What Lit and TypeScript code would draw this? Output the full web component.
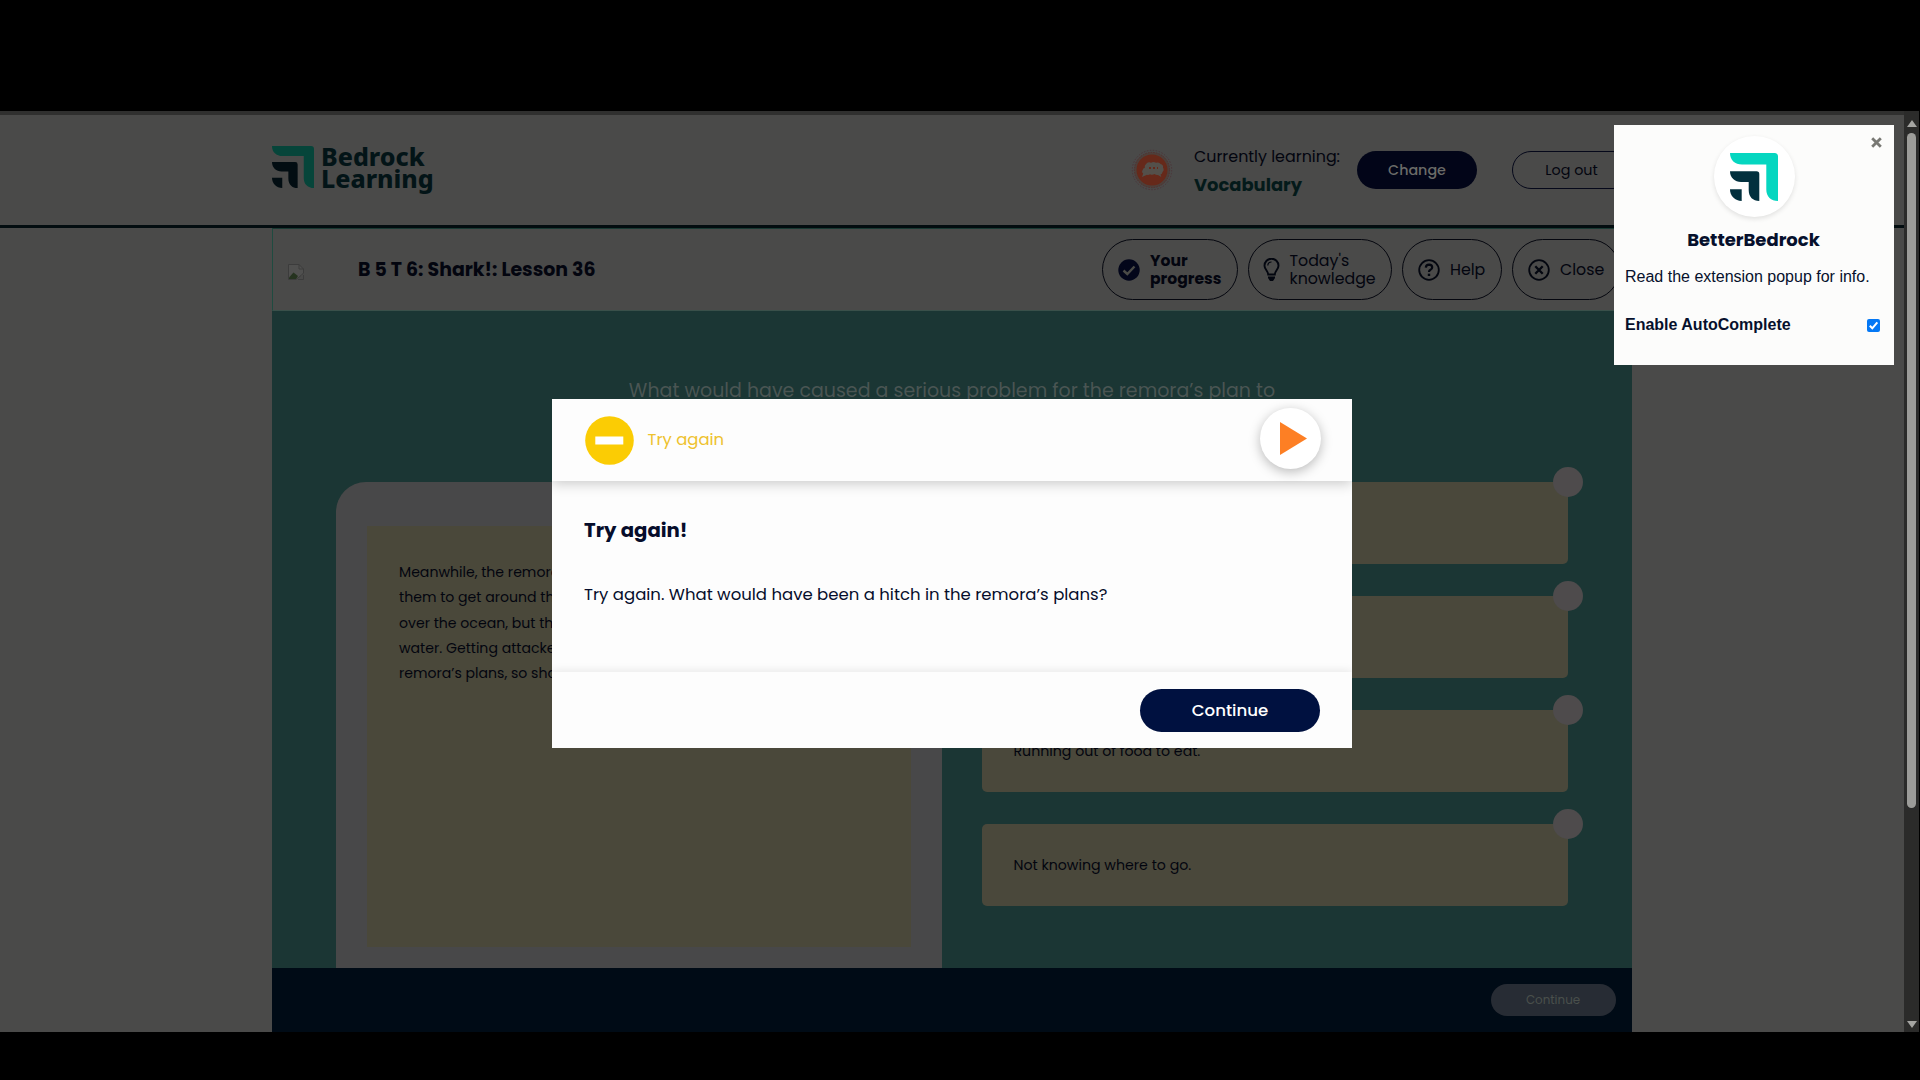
import { LitElement, html, css, svg } from "lit";
import { customElement } from "lit/decorators.js";

const mark = (a: string, b: string) => svg`
  <path fill=${a} d="M0 0H44.5Q48 0 48 3.5V48C41 48 36.3 43.500 36.300 36.500V11.500H12C5 11.500 0 7 0 0Z"/>
  <path fill=${b} d="M0 18.300H26.500Q29.300 18.300 29.300 21.100V48C23 48 18.700 44 18.700 37V29H11C5 29 0 25 0 18.300Z"/>
  <path fill=${b} d="M0 36.300H11.700V48C5 48 0 43 0 36.300Z"/>`;

const PASSAGE = [
  "Meanwhile, the remora",
  "them to get around the",
  "over the ocean, but the",
  "water. Getting attacked",
  "remora’s plans, so sharks",
];
const ANSWERS = ["", "", "Running out of food to eat.", "Not knowing where to go."];

@customElement("app-root")
export class AppRoot extends LitElement {
  static styles = css`
    :host { display: block; width: 1920px; height: 1080px; background: #000; overflow: hidden; position: relative;
      font-family: Poppins, Inter, "Liberation Sans", sans-serif; color: #03050f; white-space: nowrap; box-sizing: border-box; padding-top: 111px; }
    * { box-sizing: border-box; }
    svg { display: block; flex: none; }
    .screen { display: flex; height: 921px; width: 1919px; background: #4a4a49; }
    .page { width: 1904px; display: flex; flex-direction: column; }
    .strip { height: 4px; background: #30302f; }
    .head { height: 113px; border-bottom: 3px solid #030d10; padding: 0 272px; display: flex; align-items: center; }
    .logo { margin-bottom: 6px; }
    .brand { margin-left: 7px; font: 800 25px/22px "Noto Sans", "Open Sans", sans-serif; color: #031417; margin-bottom: 6px; }
    .topic { margin-left: auto; margin-right: 21px; }
    .who { width: 163px; font-size: 15.900px; line-height: 28px; padding-top: 1px; }
    .voc { font-weight: 700; font-size: 17.900px; color: #041a1a; }
    .btn { display: flex; align-items: center; justify-content: center; border-radius: 30px; font-size: 14.300px; }
    .change { width: 120px; height: 38px; background: #020518; color: #6b6b68; font-weight: 500; padding-top: 1px; }
    .logout { width: 120px; height: 38px; border: 1px solid #05081a; margin-left: 35px; padding: 1px 1px 0 0; }
    .lesson { width: 1360px; margin-left: 272px; flex: 1; display: flex; flex-direction: column; }
    .bar { height: 83px; border-left: 1px solid #1f4b40; border-bottom: 1px solid #3a504a; border-top: 1px solid #1a3a33; display: flex; align-items: center; padding: 0 12px 0 15px; gap: 10px; }
    .broken { margin-top: 4px; }
    .title { font-weight: 700; font-size: 18.950px; margin-left: 44px; margin-right: auto; }
    .pill { height: 61px; border: 1px solid #05070f; border-radius: 31px; display: flex; align-items: center; font-size: 15.800px; line-height: 18px; padding-left: 15px; }
    .p1 { width: 136px; font-weight: 700; gap: 10px; font-size: 15.600px; }
    .p2 { width: 144px; gap: 9.500px; padding-left: 14px; }
    .p3 { width: 100px; gap: 10px; }
    .p4 { width: 108px; gap: 10px; }
    .work { flex: 1; background: #1b3634; padding: 65px 49px 0 64px; display: flex; flex-direction: column; }
    .q { font-size: 19px; line-height: 30px; color: #4a5553; text-align: center; height: 106px; padding-right: 15px; font-weight: 400; }
    .cols { display: flex; gap: 40px; flex: 1; }
    .reading { width: 606px; background: #484849; border-radius: 30px 0 0 0; padding: 44px 31px 21px; }
    .text { height: 421px; background: #4a483a; padding: 34px 0 0 32px; font-size: 14.100px; line-height: 25.300px; }
    .answers { display: flex; flex-direction: column; gap: 32px; }
    .card { width: 586px; height: 82px; background: #4a483b; border-radius: 5px; position: relative; display: flex; align-items: center; padding-left: 31.500px; font-size: 14.160px; }
    .dot { position: absolute; right: -15px; top: -15px; width: 30px; height: 30px; border-radius: 50%; background: #4e4b4c; }
    .foot { height: 64px; background: #000b16; display: flex; align-items: center; justify-content: flex-end; padding-right: 16px; }
    .off { width: 125px; height: 32px; background: #272c34; color: #4a504c; font-size: 11.900px; padding-right: 1px; }
    .scroll { width: 15px; background: #2b2b2a; display: flex; flex-direction: column; align-items: center; padding-top: 9px; }
    .thumb { width: 9px; height: 675px; margin-top: 6px; border-radius: 5px; background: #9c9c99; }
    .down { margin-top: 213px; }
    .modal { position: absolute; left: 552px; top: 399px; width: 800px; height: 349px; background: #fdfdfd; display: flex; flex-direction: column; color: #060d2b; }
    .mh { height: 82px; display: flex; align-items: center; padding: 0 31.500px 0 32.500px; box-shadow: 0 3px 12px #0003; clip-path: inset(0 0 -18px 0); font-size: 16.450px; color: #eec22e; gap: 14px; flex: none; }
    .mh span { margin-top: -2px; }
    .play { margin-left: auto; margin-top: -3px; width: 61px; height: 61px; border-radius: 50%; background: #fff; box-shadow: 0 3px 12px #0004; display: flex; align-items: center; padding-left: 20px; }
    .mb { flex: 1; padding: 34px 32px 0; }
    .mb b { display: block; font-size: 19.700px; line-height: 30px; }
    .mb p { margin: 35px 0 0; font-size: 16.530px; line-height: 30px; }
    .mf { height: 76px; box-shadow: 0 -2px 8px #00000014; clip-path: inset(-12px 0 0 0); display: flex; justify-content: flex-end; align-items: center; padding: 0 32px 0 0; }
    .go { width: 180px; height: 43px; background: #001140; color: #fff; font-size: 16.600px; font-weight: 500; }
    .pop { position: absolute; left: 1614px; top: 125px; width: 280px; height: 240px; background: #fcfcfb; color: #06102c; display: flex; flex-direction: column; padding: 11px 12px 0 11px; font: 16px/20px "Liberation Sans", Arial, sans-serif; }
    .round { align-self: center; margin-left: 1px; width: 81px; height: 81px; border-radius: 50%; background: #fff; box-shadow: 0 2px 5px #0000001c; display: flex; align-items: center; justify-content: center; }
    .name { align-self: center; font: 700 18px/26px Poppins, Inter, sans-serif; margin-top: 9.500px; }
    .info { margin-top: 14.500px; }
    .opt { display: flex; margin-top: 28px; align-items: center; justify-content: space-between; font-weight: 700; padding-right: 2px; }
    .x { position: absolute; right: 12.500px; top: 12px; }
  `;

  render() {
    const ink = "#03060f";
    return html`
      <div class="screen">
        <div class="page">
          <div class="strip"></div>
          <div class="head">
            <svg class="logo" width="42" height="42" viewBox="0 0 48 48">${mark("#06453a", "#020d12")}</svg>
            <div class="brand"><div>Bedrock</div><div>Learning</div></div>
            <svg class="topic" width="42" height="42" viewBox="0 0 42 42">
              <circle cx="21" cy="21" r="19.700" fill="none" stroke="#4c3539" stroke-dasharray="1.500 1.500"/>
              <circle cx="21" cy="21" r="17.600" fill="#4d403b" stroke="#54302f" stroke-dasharray="1.500 1.200"/>
              <circle cx="21" cy="21" r="15.500" fill="#66291a"/>
              <path fill="#54504a" d="M15.500 14.500q2-2 4.500-.8 2.500-1.500 5 0 3.500-1 4.500 1.300 3 .5 2.500 3.500 1.500 2.500-.5 4.500-.3 2-2 2.500l.8 2.500-3.300-2q-2 .3-3.500-1-2 1.500-4.500.3-1.500 1-3 .5l-5 2.200 1.200-3.500q-2-1.500-.5-3.500 .2-2 2-2-.5-3 1.800-4.500z"/>
              <path stroke="#66291a" stroke-width="1.800" stroke-dasharray="2 2" d="M18 19h9"/>
            </svg>
            <div class="who"><div>Currently learning:</div><div class="voc">Vocabulary</div></div>
            <div class="btn change">Change</div>
            <div class="btn logout">Log out</div>
          </div>
          <div class="lesson">
            <div class="bar">
              <svg class="broken" width="16" height="16" viewBox="0 0 16 16"><path d="M.5.5H11L15.500 5V9L13 11.500 8 15.500H.5Z" fill="#50504f" stroke="#3c3c3c"/><path d="M11 .5V5H15.500M15.500 11V15.500H10" fill="none" stroke="#3c3c3c"/><path d="M1 13.500 5.500 8.500 10 12 8 15H1Z" fill="#25331f"/></svg>
              <div class="title">B 5 T 6: Shark!: Lesson 36</div>
              <div class="pill p1"><svg width="22" height="22" viewBox="0 0 22 22"><circle cx="11" cy="11" r="10.700" fill="#03061a"/><path d="M5.500 11.500 9.300 15 16.500 7.500" fill="none" stroke="#4a4a46" stroke-width="2.400"/></svg><div><div>Your</div><div>progress</div></div></div>
              <div class="pill p2"><svg width="17" height="24" viewBox="0 0 17 24"><path d="M5.200 16.500C5.200 13 1.500 11.500 1.500 7.700a7 7 0 0 1 14 0C15.500 11.500 11.800 13 11.800 16.500Z" fill="none" stroke=${ink} stroke-width="1.900"/><path d="M4.800 7.500a3.700 3.700 0 0 1 3.700-3.500" fill="none" stroke=${ink} stroke-width="1.200"/><path d="M5 18.500h7v1.500l-2 3H7l-2-3z" fill=${ink}/></svg><div><div>Today's</div><div>knowledge</div></div></div>
              <div class="pill p3"><svg width="22" height="22" viewBox="0 0 22 22" fill="none" stroke=${ink}><circle cx="11" cy="11" r="9.800" stroke-width="1.800"/><path d="M7.800 8.600Q8 5.600 11.100 5.600 14.200 5.700 14.200 8.300 14.200 10 12.500 10.800 11 11.500 11 13" stroke-width="2.200"/><path d="M11 14.700V17" stroke-width="2.400"/></svg>Help</div>
              <div class="pill p4"><svg width="22" height="22" viewBox="0 0 22 22" fill="none" stroke=${ink}><circle cx="11" cy="11" r="9.800" stroke-width="1.800"/><path d="M7.300 7.300 14.700 14.700M14.700 7.300 7.300 14.700" stroke-width="2.300"/></svg>Close</div>
            </div>
            <div class="work">
              <div class="q">What would have caused a serious problem for the remora’s plan to</div>
              <div class="cols">
                <div class="reading"><div class="text">${PASSAGE.map((l) => html`<div>${l}</div>`)}</div></div>
                <div class="answers">${ANSWERS.map((a) => html`<div class="card">${a}<i class="dot"></i></div>`)}</div>
              </div>
            </div>
            <div class="foot"><div class="btn off">Continue</div></div>
          </div>
        </div>
        <div class="scroll">
          <svg width="10" height="7" viewBox="0 0 10 7"><path fill="#a5a5a2" d="M5 0 10 7H0Z"/></svg>
          <div class="thumb"></div>
          <svg class="down" width="10" height="7" viewBox="0 0 10 7"><path fill="#a5a5a2" d="M0 0H10L5 7Z"/></svg>
        </div>
      </div>

      <div class="modal">
        <div class="mh">
          <svg width="49" height="49" viewBox="0 0 49 49"><circle cx="24.500" cy="24.500" r="24.300" fill="#fbcc04"/><rect x="10.300" y="20.500" width="28" height="8" fill="#fff"/></svg>
          <span>Try again</span>
          <div class="play"><svg width="27" height="33" viewBox="0 0 27 33"><path fill="#fd7f24" d="M0 0 27 16.500 0 33Z"/></svg></div>
        </div>
        <div class="mb"><b>Try again!</b><p>Try again. What would have been a hitch in the remora’s plans?</p></div>
        <div class="mf"><div class="btn go">Continue</div></div>
      </div>

      <div class="pop">
        <svg class="x" width="11" height="11" viewBox="0 0 11 11"><path d="M1.200 1.200 9.800 9.800M9.800 1.200 1.200 9.800" stroke="#787873" stroke-width="2.800"/></svg>
        <div class="round"><svg width="48" height="48" viewBox="0 0 48 48">${mark("#05d6c0", "#02303e")}</svg></div>
        <div class="name">BetterBedrock</div>
        <div class="info">Read the extension popup for info.</div>
        <div class="opt">Enable AutoComplete<svg width="13" height="13" viewBox="0 0 13 13"><rect width="13" height="13" rx="2" fill="#0478f5"/><path d="M2.800 6.800 5.300 9.300 10.300 3.300" fill="none" stroke="#fff" stroke-width="2"/></svg></div>
      </div>
    `;
  }
}
